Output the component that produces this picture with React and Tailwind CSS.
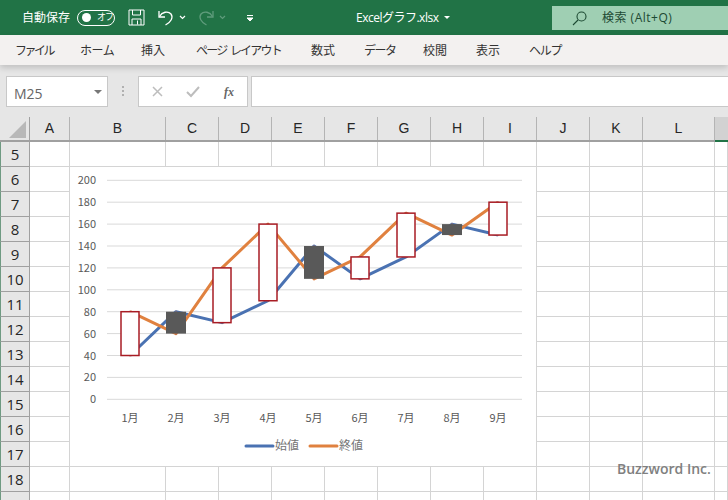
import React from 'react';

const columns = [
  ['A', 40], ['B', 96], ['C', 53], ['D', 53], ['E', 53], ['F', 53],
  ['G', 53], ['H', 53], ['I', 53], ['J', 53], ['K', 53], ['L', 72], ['', 13],
];
const rows = [5, 6, 7, 8, 9, 10, 11, 12, 13, 14, 15, 16, 17, 18, 19];

const opens = [40, 80, 70, 90, 140, 110, 130, 160, 150];
const closes = [80, 60, 120, 160, 110, 130, 170, 150, 180];

const xAt = (i) => 60 + 46 * i;
const yAt = (v) => 232.3 - v * 1.095;
const linePoints = (data) => data.map((v, i) => `${xAt(i)},${yAt(v)}`).join(' ');

const Chart = () => (
  <div className="absolute left-[70px] top-[167px] w-[466px] h-[299px] bg-white">
    <svg width="466" height="299" viewBox="0 0 466 299" style={{ fontFamily: '"Noto Sans CJK JP", "Noto Sans", sans-serif' }}>
      {[0, 20, 40, 60, 80, 100, 120, 140, 160, 180, 200].map((v) => (
        <g key={v}>
          <line x1="37" x2="452" y1={yAt(v)} y2={yAt(v)} stroke="#d9d9d9" strokeWidth="1" />
          <text x="26" y={yAt(v) + 4} textAnchor="end" fontSize="11" fill="#595959">{v}</text>
        </g>
      ))}
      <polyline points={linePoints(opens)} fill="none" stroke="#4a72b2" strokeWidth="3" strokeLinejoin="round" />
      <polyline points={linePoints(closes)} fill="none" stroke="#e0813f" strokeWidth="3" strokeLinejoin="round" />
      {opens.map((open, i) => {
        const close = closes[i];
        const top = yAt(Math.max(open, close));
        const bottom = yAt(Math.min(open, close));
        const up = close > open;
        return (
          <g key={i}>
            <line x1={xAt(i)} x2={xAt(i)} y1={top - 1} y2={bottom + 1} stroke="#a06a60" strokeWidth="1" />
            <rect
              x={xAt(i) - (up ? 9 : 10)}
              y={top}
              width={up ? 18 : 20}
              height={bottom - top}
              fill={up ? '#ffffff' : '#595959'}
              stroke={up ? '#a81c24' : 'none'}
              strokeWidth="1.5"
            />
          </g>
        );
      })}
      {['1月', '2月', '3月', '4月', '5月', '6月', '7月', '8月', '9月'].map((m, i) => (
        <text key={m} x={xAt(i)} y="255" textAnchor="middle" fontSize="11" fill="#595959">{m}</text>
      ))}
      <line x1="176" x2="203" y1="279" y2="279" stroke="#4a72b2" strokeWidth="3" strokeLinecap="round" />
      <text x="205" y="283" fontSize="12" fill="#757575">始値</text>
      <line x1="240" x2="267" y1="279" y2="279" stroke="#e0813f" strokeWidth="3" strokeLinecap="round" />
      <text x="269" y="283" fontSize="12" fill="#757575">終値</text>
    </svg>
  </div>
);

const TitleBar = () => (
  <div className="h-[35px] bg-[#217346] flex items-center text-white relative shrink-0">
    <span className="ml-[22px] w-[48px] text-[12px] whitespace-nowrap">自動保存</span>
    <div className="ml-[7px] w-[38px] h-[16px] rounded-full border border-white flex items-center">
      <span className="ml-[4px] w-[9px] h-[9px] rounded-full bg-white" />
      <span className="ml-[6px] text-[9px] leading-none tracking-[-1px]">オフ</span>
    </div>
    <svg className="ml-[13px]" width="17" height="17" viewBox="0 0 17 17" fill="none" stroke="#fff" strokeWidth="1">
      <path d="M1 1h15v15H1z" />
      <path d="M4.500 1v5h8V1M4 16v-6h9v6M9.500 11.500v4" />
    </svg>
    <svg className="ml-[12px]" width="17" height="17" viewBox="0 0 17 17" fill="none" stroke="#fff" strokeWidth="1.300">
      <path d="M2 2v6h6" />
      <path d="M2.500 7.500C5 3 11 1.500 14 5c2.500 3.500 0 8-5.500 11" />
    </svg>
    <svg className="ml-[5px]" width="7" height="5" viewBox="0 0 7 5" fill="none" stroke="#fff" strokeWidth="1.200">
      <path d="M1 1l2.500 2.500L6 1" />
    </svg>
    <svg className="ml-[12px]" width="17" height="17" viewBox="0 0 17 17" fill="none" stroke="#5f9c7c" strokeWidth="1.300">
      <path d="M15 2v6H9" />
      <path d="M14.500 7.500C12 3 6 1.500 3 5c-2.500 3.500 0 8 5.500 11" />
    </svg>
    <svg className="ml-[4px]" width="7" height="5" viewBox="0 0 7 5" fill="none" stroke="#5f9c7c" strokeWidth="1.200">
      <path d="M1 1l2.500 2.500L6 1" />
    </svg>
    <svg className="ml-[20px]" width="8" height="8" viewBox="0 0 8 8" fill="none" stroke="#fff" strokeWidth="1">
      <path d="M1 1.500h6" />
      <path d="M1 4l3 3 3-3z" fill="#fff" />
    </svg>
    <span
      className="ml-[102px] w-[84px] text-[12px] whitespace-nowrap tracking-[-0.5px]"
      style={{ fontFamily: '"Open Sans", "Noto Sans CJK JP", sans-serif' }}
    >
      Excelグラフ.xlsx
    </span>
    <span className="ml-[4px] w-0 h-0 border-x-[3px] border-x-transparent border-t-[3px] border-t-white" />
    <div className="absolute left-[552px] top-[6px] w-[176px] h-[24px] bg-[#9fcfb3] flex items-center text-[#1d4a33]">
      <svg className="ml-[20px]" width="15" height="15" viewBox="0 0 15 15" fill="none" stroke="#1d4a33" strokeWidth="1.100">
        <circle cx="9.500" cy="5.500" r="4.500" />
        <path d="M6 9l-5 5" />
      </svg>
      <span
        className="ml-[15px] text-[12px] tracking-[0.5px] whitespace-nowrap"
        style={{ fontFamily: '"Open Sans", "Noto Sans CJK JP", sans-serif' }}
      >
        検索 (Alt+Q)
      </span>
    </div>
  </div>
);

const RibbonTabs = () => (
  <div className="h-[30px] pt-[1px] bg-[#f3f1f0] flex items-center text-[12px] text-[#333333] shrink-0 shadow-[0_3px_6px_rgba(0,0,0,0.16)] relative">
    <span className="ml-[15px] w-[37px] tracking-[-2.500px] whitespace-nowrap">ファイル</span>
    <span className="ml-[28px] w-[34px] tracking-[-0.500px] whitespace-nowrap">ホーム</span>
    <span className="ml-[27px] w-[25px] whitespace-nowrap">挿入</span>
    <span className="ml-[30px] w-[86px] tracking-[-1.800px] [word-spacing:2px] whitespace-nowrap">ページ レイアウト</span>
    <span className="ml-[29px] w-[26px] whitespace-nowrap">数式</span>
    <span className="ml-[27px] w-[31px] tracking-[-1.500px] whitespace-nowrap">データ</span>
    <span className="ml-[28px] w-[25px] whitespace-nowrap">校閲</span>
    <span className="ml-[28px] w-[26px] whitespace-nowrap">表示</span>
    <span className="ml-[27px] w-[32px] tracking-[-1.300px] whitespace-nowrap">ヘルプ</span>
  </div>
);

const FormulaBar = () => (
  <div className="h-[52px] bg-[#e6e6e6] pt-[11px] pl-[6px] flex items-start shrink-0">
    <div className="w-[102px] h-[31px] bg-white border border-[#c8c8c8] flex items-center justify-between pl-[7px] pr-[5px]">
      <span className="text-[14px] pt-[3px] text-[#666666]" style={{ fontFamily: '"Open Sans", sans-serif' }}>M25</span>
      <span className="w-0 h-0 border-x-[4px] border-x-transparent border-t-[4px] border-t-[#777777]" />
    </div>
    <div className="ml-[14px] mt-[10px] w-[2px] h-[10px] flex flex-col justify-between">
      <span className="w-[2px] h-[2px] bg-[#b0b0b0]" />
      <span className="w-[2px] h-[2px] bg-[#b0b0b0]" />
      <span className="w-[2px] h-[2px] bg-[#b0b0b0]" />
    </div>
    <div className="ml-[14px] w-[110px] h-[31px] bg-white border border-[#c8c8c8] flex items-center">
      <svg className="ml-[13px]" width="11" height="11" viewBox="0 0 11 11" stroke="#bdbdbd" strokeWidth="1.500">
        <path d="M1 1l9 9M10 1l-9 9" />
      </svg>
      <svg className="ml-[23px]" width="14" height="12" viewBox="0 0 14 12" fill="none" stroke="#bdbdbd" strokeWidth="2">
        <path d="M1 6l4 4 8-9" />
      </svg>
      <span
        className="ml-[24px] text-[12px] font-bold italic text-[#666666] leading-none"
        style={{ fontFamily: '"Liberation Serif", serif' }}
      >
        fx
      </span>
    </div>
    <div className="ml-[3px] flex-1 h-[31px] bg-white border-y border-l border-[#c8c8c8]" />
  </div>
);

const Sheet = () => (
  <div className="flex-1 overflow-hidden">
    <div className="flex h-[25px] bg-[#e6e6e6] border-b-2 border-[#a0a0a0]">
      <div className="w-[30px] shrink-0 bg-[#e6e6e6] border-r border-[#a0a0a0] flex items-end justify-end pr-[3px] pb-[2px]">
        <span className="w-0 h-0 border-l-[17px] border-l-transparent border-b-[17px] border-b-[#b8b8b8]" />
      </div>
      {columns.map(([name, w]) => (
        <div
          key={w + name}
          style={{ width: w }}
          className={name
            ? 'shrink-0 border-r border-[#b4b4b4] flex items-center justify-center text-[14px] text-[#262626]'
            : 'shrink-0 h-[25px] bg-[#d2d2d2] border-b-2 border-[#217346]'}
        >
          {name}
        </div>
      ))}
    </div>
    {rows.map((r) => (
      <div key={r} className="flex h-[25px]">
        <div
          className="w-[30px] shrink-0 bg-[#e6e6e6] border-l border-l-[#6f9a82] border-r border-b border-r-[#a0a0a0] border-b-[#a0a0a0] flex items-center justify-center text-[15px] text-[#262626]"
          style={{ fontFamily: '"Open Sans", sans-serif' }}
        >
          {r}
        </div>
        {columns.map(([name, w]) => (
          <div key={w + name} style={{ width: w }} className="shrink-0 bg-white border-r border-b border-[#d4d4d4]" />
        ))}
      </div>
    ))}
  </div>
);

export default function App() {
  return (
    <div
      className="relative w-[728px] h-[500px] overflow-hidden flex flex-col bg-white"
      style={{ fontFamily: '"Liberation Sans", "Noto Sans CJK JP", sans-serif' }}
    >
      <TitleBar />
      <RibbonTabs />
      <FormulaBar />
      <Sheet />
      <Chart />
      <span
        className="absolute left-[617px] top-[458px] text-[14px] font-semibold text-[#808080]"
        style={{ fontFamily: '"Open Sans", sans-serif' }}
      >
        Buzzword Inc.
      </span>
    </div>
  );
}
